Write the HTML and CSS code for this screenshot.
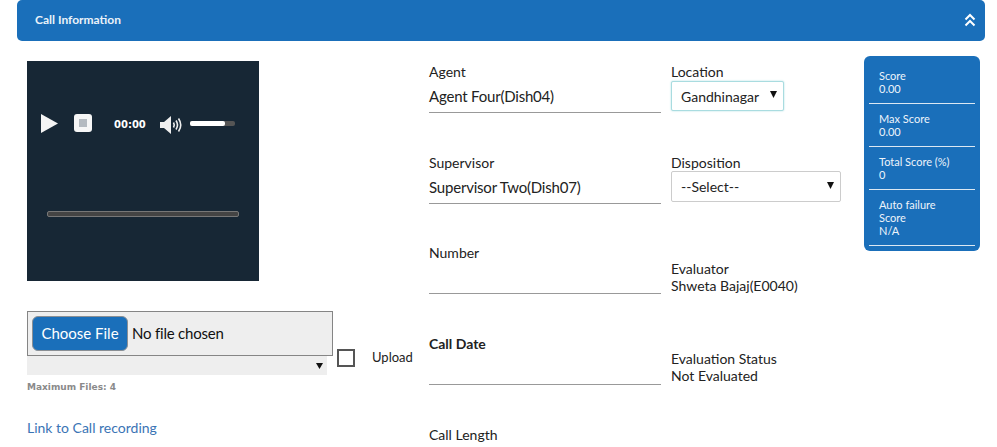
FILE: index.html
```html
<!DOCTYPE html>
<html lang="en">
<head>
    <meta charset="UTF-8">
    <meta name="viewport" content="width=device-width, initial-scale=1.0">
    <title>Call Information</title>
    <link rel="stylesheet" href="styles.css">
</head>
<body>
    <div class="panel-head">
        <span class="panel-title">Call Information</span>
        <svg class="collapse-icon" width="12" height="14" viewBox="0 0 12 14" fill="none" stroke="#fff" stroke-width="2">
            <path d="M1.500 6.500 6 2l4.500 4.500"/>
            <path d="M1.500 12.500 6 8l4.500 4.500"/>
        </svg>
    </div>

    <div class="content">
        <div class="col-left">
            <div class="player">
                <div class="player-controls">
                    <svg class="play-icon" width="17" height="19" viewBox="0 0 17 19"><path d="M0 0 17 9.500 0 19z" fill="#f4f4f4"/></svg>
                    <div class="stop-btn"><span class="stop-inner"></span></div>
                    <span class="player-time">00:00</span>
                    <svg class="volume-icon" width="23" height="18" viewBox="0 0 23 18" fill="none" stroke="#eee" stroke-width="1.600">
                        <path d="M0 6h4l7-6v18l-7-6H0z" fill="#eee" stroke="none"/>
                        <path d="M13.500 6.500q1.500 2.500 0 5"/>
                        <path d="M16 4.500q3 4.500 0 9"/>
                        <path d="M18.500 2.500q4.500 6.500 0 13"/>
                    </svg>
                    <div class="volume-bar"><span class="volume-fill"></span></div>
                </div>
                <div class="progress-bar"></div>
            </div>

            <div class="upload-row">
                <div class="upload-files">
                    <input type="file" class="file-input">
                    <div class="file-list">
                        <svg width="7" height="7" viewBox="0 0 7 7"><path d="M0 1h7L3.500 7z" fill="#111"/></svg>
                    </div>
                </div>
                <span class="upload-check"></span>
                <span class="upload-label">Upload</span>
            </div>
            <p class="max-files">Maximum Files: 4</p>
            <a class="recording-link" href="#">Link to Call recording</a>
        </div>

        <div class="col-fields">
            <div class="field">
                <label>Agent</label>
                <div class="field-value">Agent Four(Dish04)</div>
            </div>
            <div class="field field-short">
                <label>Supervisor</label>
                <div class="field-value">Supervisor Two(Dish07)</div>
            </div>
            <div class="field">
                <label>Number</label>
                <div class="field-value"></div>
            </div>
            <div class="field">
                <label class="bold">Call Date</label>
                <div class="field-value"></div>
            </div>
            <div class="field-last">
                <label>Call Length</label>
            </div>
        </div>

        <div class="col-info">
            <div class="info-block">
                <label>Location</label>
                <div class="select select-location">
                    <span>Gandhinagar</span>
                    <svg width="7" height="7" viewBox="0 0 7 7"><path d="M0 0h7L3.500 7z" fill="#111"/></svg>
                </div>
            </div>
            <div class="info-block">
                <label>Disposition</label>
                <div class="select select-disposition">
                    <span>--Select--</span>
                    <svg width="7" height="7" viewBox="0 0 7 7"><path d="M0 0h7L3.500 7z" fill="#111"/></svg>
                </div>
            </div>
            <div class="info-block info-text">
                <div>Evaluator</div>
                <div>Shweta Bajaj(E0040)</div>
            </div>
            <div class="info-block info-text">
                <div>Evaluation Status</div>
                <div>Not Evaluated</div>
            </div>
        </div>

        <div class="score-box">
            <div class="score-row">Score<br>0.00</div>
            <div class="score-row">Max Score<br>0.00</div>
            <div class="score-row">Total Score (%)<br>0</div>
            <div class="score-row">Auto failure<br>Score<br>N/A</div>
        </div>
    </div>
</body>
</html>
```

FILE: styles.css
```css
body {
    font-family: Lato, "Open Sans", sans-serif;
    font-size: 14px;
    color: #222;
    margin: 0;
    padding: 0;
    background-color: #fff;
}

.panel-head {
    display: flex;
    align-items: center;
    justify-content: space-between;
    height: 41px;
    margin: 0 12px 0 17px;
    padding: 0 9px 2px 18px;
    box-sizing: border-box;
    border-radius: 5px;
    background-color: #1a6fba;
    color: #fff;
}

.panel-title {
    font-size: 12px;
    font-weight: 700;
    color: #eaf2f9;
}

.content {
    display: flex;
    align-items: flex-start;
    padding-left: 27px;
}

.col-left {
    width: 402px;
    padding-top: 20px;
}

.player {
    width: 232px;
    height: 220px;
    padding-top: 52px;
    box-sizing: border-box;
    background-color: #172735;
}

.player-controls {
    display: flex;
    align-items: center;
    height: 20px;
    padding-left: 14px;
}

.stop-btn {
    display: flex;
    align-items: center;
    justify-content: center;
    width: 18px;
    height: 18px;
    margin-left: 16px;
    border-radius: 3px;
    background-color: #f6f6f6;
}

.stop-inner {
    width: 8px;
    height: 8px;
    background-color: #b4bac0;
}

.player-time {
    width: 32px;
    margin-left: 22px;
    padding-top: 2px;
    font-family: "DejaVu Sans", sans-serif;
    font-size: 10px;
    font-weight: 700;
    color: #fff;
}

.volume-icon {
    margin-left: 14px;
    margin-top: 4px;
}

.volume-bar {
    width: 45px;
    height: 5px;
    margin-left: 7px;
    border-radius: 2px;
    background-color: #555;
}

.volume-fill {
    display: block;
    width: 35px;
    height: 5px;
    border-radius: 2px;
    background-color: #fff;
}

.progress-bar {
    width: 192px;
    height: 6px;
    margin: 78px 0 0 20px;
    box-sizing: border-box;
    border: 1px solid #777;
    border-radius: 2px;
    background-color: #444;
}

.upload-row {
    display: flex;
    align-items: flex-start;
    margin-top: 30px;
}

.upload-files {
    width: 306px;
}

.file-input {
    display: block;
    width: 306px;
    height: 45px;
    padding: 4px;
    box-sizing: border-box;
    border: 1px solid #858585;
    background-color: #eee;
    font-family: Lato, sans-serif;
    font-size: 15px;
    letter-spacing: -0.2px;
    color: #111;
}

.file-input::file-selector-button {
    height: 35px;
    width: 96px;
    margin-right: 4px;
    padding: 0 0 2px;
    border: 1px solid #8a8f94;
    border-radius: 6px;
    background-color: #1a6fba;
    font-family: Lato, sans-serif;
    font-size: 15px;
    letter-spacing: 0;
    color: #fff;
}

.file-list {
    display: flex;
    align-items: center;
    justify-content: flex-end;
    width: 300px;
    height: 19px;
    padding-right: 4px;
    box-sizing: border-box;
    background-color: #eee;
}

.upload-check {
    width: 18px;
    height: 18px;
    margin: 38px 0 0 4px;
    box-sizing: border-box;
    border: 2px solid #555;
}

.upload-label {
    margin: 36px 0 0 17px;
    font-size: 13px;
    line-height: 20px;
}

.max-files {
    margin: 6px 0 0;
    font-family: "DejaVu Sans", sans-serif;
    font-size: 9px;
    line-height: 12px;
    font-weight: 700;
    color: #8a8a8a;
}

.recording-link {
    display: inline-block;
    margin-top: 25px;
    font-size: 14px;
    line-height: 20px;
    color: #3a74b5;
    text-decoration: none;
}

.col-fields {
    width: 232px;
    padding-top: 21px;
}

.field {
    height: 91px;
}

.field-short {
    height: 90px;
}

.field-last {
    height: 20px;
}

label {
    display: block;
    font-size: 14px;
    line-height: 20px;
}

.bold {
    font-weight: 700;
}

.field-value {
    height: 31px;
    box-sizing: border-box;
    border-bottom: 1px solid #999;
    font-size: 15px;
    letter-spacing: -0.2px;
    line-height: 29px;
}

.col-info {
    width: 193px;
    margin-left: 10px;
    padding-top: 21px;
}

.info-block {
    height: 91px;
}

.select {
    display: flex;
    align-items: center;
    justify-content: space-between;
    box-sizing: border-box;
    padding: 0 6px 0 9px;
    border: 1px solid #ccc;
    border-radius: 2px;
    background-color: #fff;
    font-size: 14px;
}

.select svg {
    margin-top: -3px;
}

.select-location {
    width: 113px;
    height: 30px;
    margin-top: -1px;
    border-color: #a9dce0;
    box-shadow: 0 0 2px #a9dce0;
}

.select-disposition {
    width: 170px;
    height: 31px;
    margin-top: -2px;
}

.info-text {
    height: 90px;
    padding-top: 16px;
    box-sizing: border-box;
    font-size: 14px;
    line-height: 17px;
}

.score-box {
    width: 116px;
    height: 195px;
    margin-top: 15px;
    padding: 0 5px;
    box-sizing: border-box;
    border-radius: 6px;
    background-color: #1a6fba;
    color: #eef4fa;
    font-size: 11px;
    line-height: 13px;
}

.score-row {
    padding: 13px 10px 8px;
    border-bottom: 1px solid #dce8f3;
}

.score-row + .score-row {
    padding-top: 8px;
}
```
